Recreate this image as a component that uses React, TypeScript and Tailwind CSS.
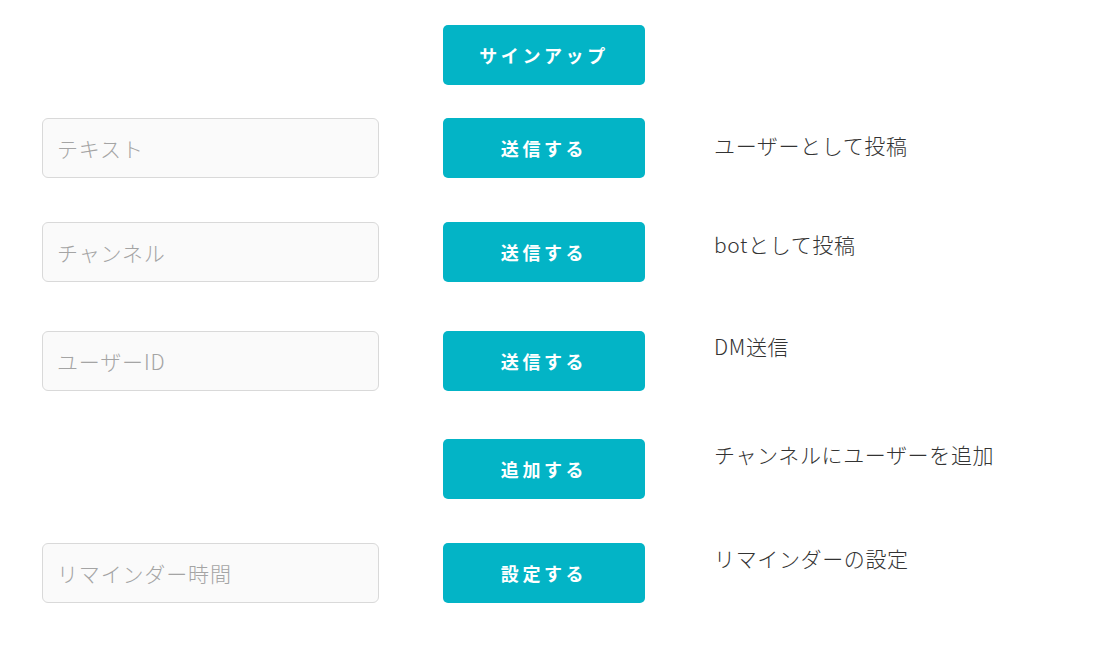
import React from 'react';

const font = { fontFamily: '"Noto Sans CJK JP", "Noto Sans", sans-serif' };

type Row = {
  placeholder?: string;
  button: string;
  label: string;
  labelPad: string;
  mt: string;
};

const rows: Row[] = [
  { placeholder: 'テキスト', button: '送信する', label: 'ユーザーとして投稿', labelPad: 'pt-[12px]', mt: 'mt-[33px]' },
  { placeholder: 'チャンネル', button: '送信する', label: 'botとして投稿', labelPad: 'pt-[7px]', mt: 'mt-[44px]' },
  { placeholder: 'ユーザーID', button: '送信する', label: 'DM送信', labelPad: 'pt-0', mt: 'mt-[49px]' },
  { button: '追加する', label: 'チャンネルにユーザーを追加', labelPad: 'pt-0', mt: 'mt-[48px]' },
  { placeholder: 'リマインダー時間', button: '設定する', label: 'リマインダーの設定', labelPad: 'pt-0', mt: 'mt-[44px]' },
];

const Btn = ({ text }: { text: string }) => (
  <button className="w-[202px] h-[60px] rounded-[5px] bg-[#03b4c6] text-white font-bold text-[18px] tracking-[0.2em] shrink-0">
    {text}
  </button>
);

export default function App() {
  return (
    <div className="min-h-screen bg-white pl-[42px] pt-[25px]" style={font}>
      <div className="flex">
        <div className="w-[337px] shrink-0" />
        <div className="ml-[64px]">
          <Btn text="サインアップ" />
        </div>
      </div>

      {rows.map((r) => (
        <div key={r.label} className={`flex items-start ${r.mt}`}>
          <div className="w-[337px] shrink-0">
            {r.placeholder && (
              <input
                placeholder={r.placeholder}
                className="w-full h-[60px] rounded-[6px] border border-[#d9d9d9] bg-[#fafafa] px-[14px] text-[21px] font-light tracking-[0.04em] text-[#333] placeholder:text-[#a4a4a4] outline-none"
              />
            )}
          </div>
          <div className="ml-[64px]">
            <Btn text={r.button} />
          </div>
          <div className={`ml-[69px] text-[21px] font-light tracking-[0.03em] leading-[30px] text-[#333] ${r.labelPad}`}>
            {r.label}
          </div>
        </div>
      ))}
    </div>
  );
}
